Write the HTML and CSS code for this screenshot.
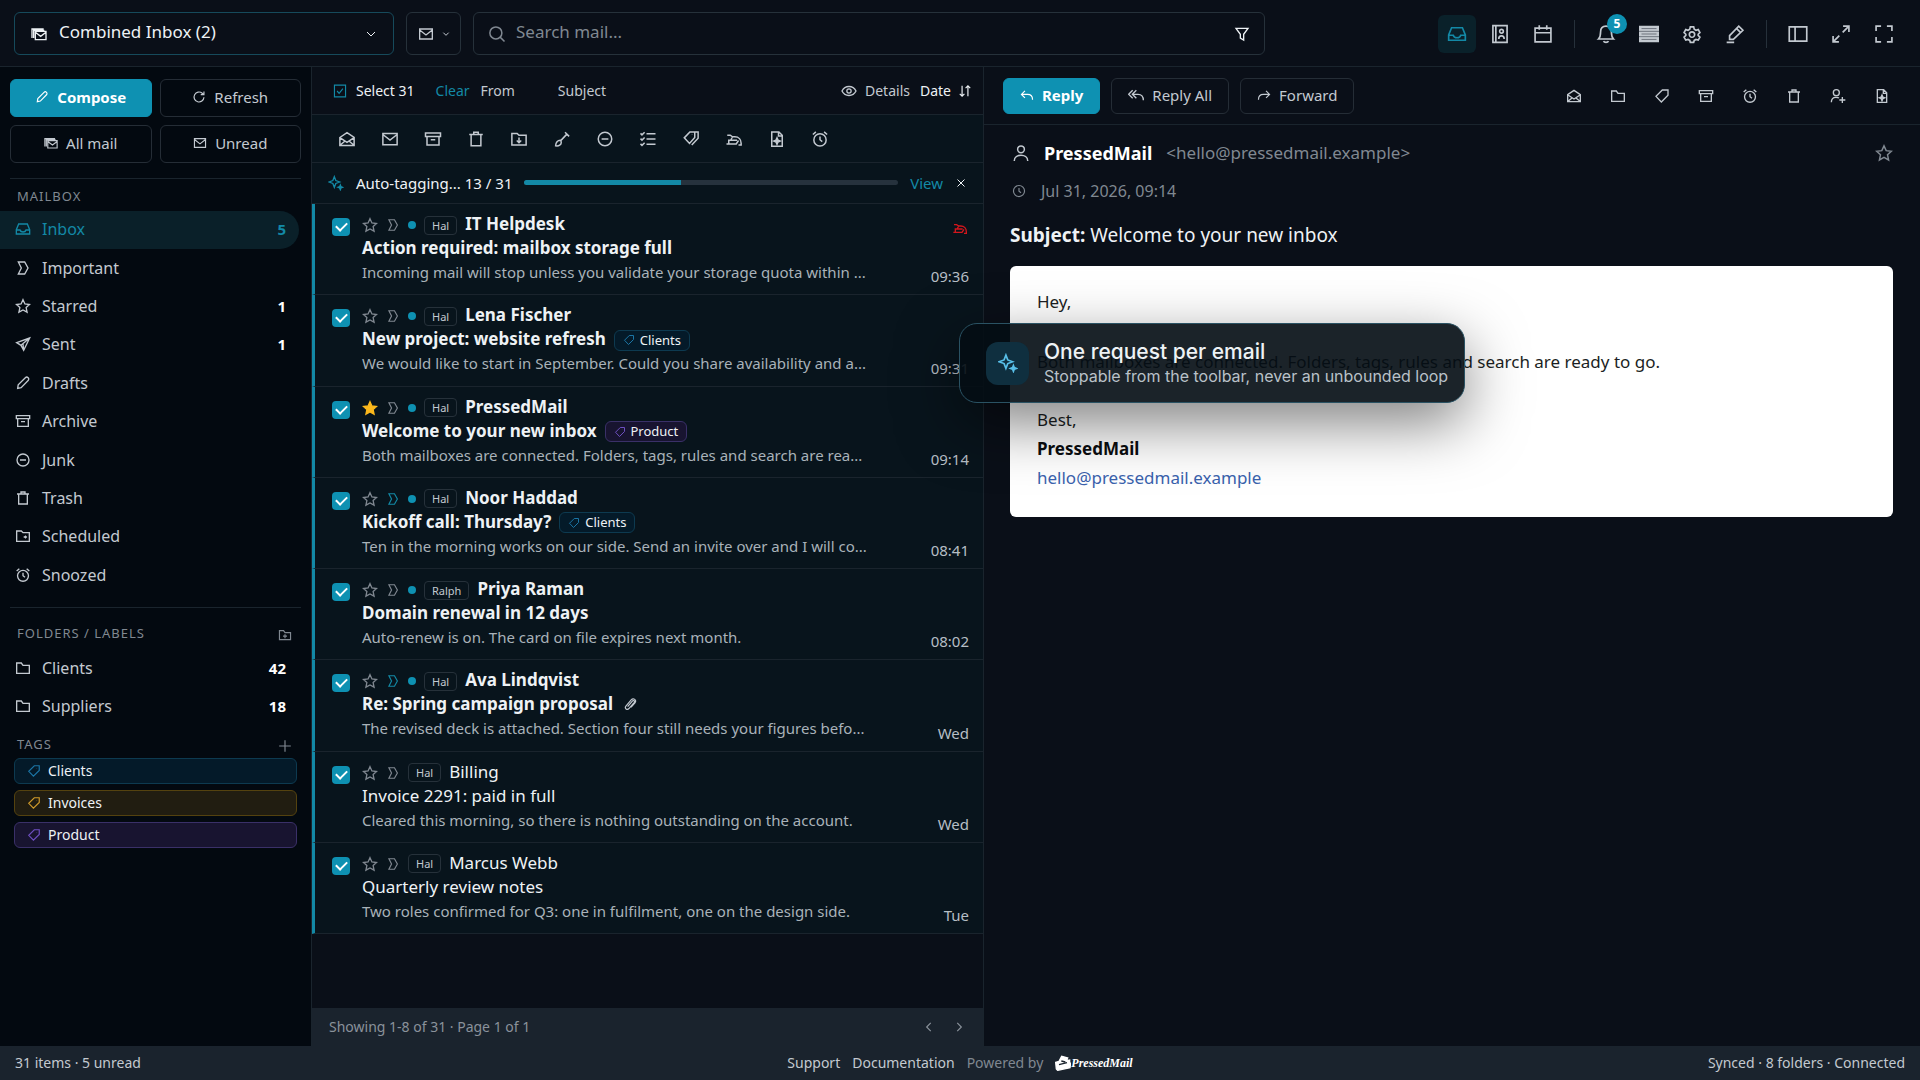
FILE: index.html
```html
<!DOCTYPE html>
<html lang="en">
<head>
<meta charset="utf-8">
<meta name="viewport" content="width=device-width, initial-scale=1">
<title>PressedMail</title>
<link rel="stylesheet" href="styles.css">
</head>
<body>
<svg class="sprite" aria-hidden="true">
  <symbol id="mail" viewBox="0 0 24 24"><path d="M2.5 4.5h19v15h-19zM2.5 6l9.500 7.500L21.500 6"/></symbol>
  <symbol id="mails" viewBox="0 0 24 24"><path d="M6.500 8h16v12.500h-16zM6.500 9.500l8 6 8-6M1.500 18V4.500H19M4 18V6.500h16"/></symbol>
  <symbol id="mail-open" viewBox="0 0 24 24"><path d="M2.500 10L12 3.500l9.500 6.500v10.500h-19zM3 10.500l9 6 9-6M3 20l6-5M21 20l-6-5"/></symbol>
  <symbol id="archive" viewBox="0 0 24 24"><path d="M2 4h20v4.500H2zM4 8.500V20h16V8.500M9 13h6"/></symbol>
  <symbol id="trash" viewBox="0 0 24 24"><path d="M3 6h18M9 6V3h6v3M5.500 6v15h13V6"/></symbol>
  <symbol id="folder" viewBox="0 0 24 24"><path d="M2.500 4.500h7L12 8h9.500v12h-19z"/></symbol>
  <symbol id="folder-plus" viewBox="0 0 24 24"><path d="M2.500 4.500h7L12 8h9.500v12h-19zM12 10.500v7M8.500 14h7"/></symbol>
  <symbol id="folder-move" viewBox="0 0 24 24"><path d="M2.500 4.500h7L12 7h9.500v13h-19zM12 10v7M9 14l3 3 3-3"/></symbol>
  <symbol id="folder-clock" viewBox="0 0 24 24"><path d="M2.500 4.500h7L12 7h9.500v13h-19zM13 13.500h4M15 11.500l2 2-2 2"/></symbol>
  <symbol id="sweep" viewBox="0 0 24 24"><path d="M16 3l5.500 5.500M18.500 5.500L10 14.500M9.500 13.500c-3 0-6 3-6 7.500 4.500.8 7.500-1.500 7.500-4.500 0-1.500-.500-2.500-1.500-3z"/></symbol>
  <symbol id="block" viewBox="0 0 24 24"><path d="M12 3a9 9 0 1 0 0 18 9 9 0 0 0 0-18zM7.500 12h9"/></symbol>
  <symbol id="checklist" viewBox="0 0 24 24"><path d="M10 5h12M10 12h12M10 19h12M2 4.500l2 2 3.500-3.500M2 11.500l2 2L7.500 10M2 18.500l2 2L7.500 17"/></symbol>
  <symbol id="tag" viewBox="0 0 24 24"><path d="M21 3h-8.500L3 12.500 11 21l10-10zM16.500 7.400v.2"/></symbol>
  <symbol id="tags" viewBox="0 0 24 24"><path d="M17 2.500h-6.500L3 10.500l7 7.500 7-8zM17 2.500h4.500V11L13 20M13.500 6v.2"/></symbol>
  <symbol id="phish" viewBox="0 0 24 24"><path d="M3 7h4l3 2h3c5.500 0 8.500 4 8.500 8.500V20H18M2 18.500h13l3-4.500M5 18.500v-5h7l4 0M10 9l-2 4"/></symbol>
  <symbol id="file-spark" viewBox="0 0 24 24"><path d="M5 2.500h9.500L19 7v14.500H5zM14 3v5h5"/><path class="solid" d="M12 10.500l1.300 3 3 1.300-3 1.300-1.300 3-1.300-3-3-1.300 3-1.300z"/></symbol>
  <symbol id="alarm" viewBox="0 0 24 24"><path d="M12 5a8.200 8.200 0 1 0 0 16.400A8.200 8.200 0 0 0 12 5zM12 8.500V13l3 2.500M2.500 6l4-3.500M21.500 6l-4-3.500"/></symbol>
  <symbol id="important" viewBox="0 0 24 24"><path d="M5 3h9.500l5 9-5 9H5l4.500-9z"/></symbol>
  <symbol id="star" viewBox="0 0 24 24"><path d="M12 2.500l2.900 6.400 6.900.8-5.100 4.700 1.400 6.900L12 17.900l-6.100 3.400 1.400-6.900L2.200 9.700l6.900-.8z"/></symbol>
  <symbol id="send" viewBox="0 0 24 24"><path d="M22 3L2.500 10l6.500 4 4 7.500zM22 3L9 14M13 21.500L12 12"/></symbol>
  <symbol id="pencil" viewBox="0 0 24 24"><path d="M4 20l.8-5.200L15.500 4c1.200-1.200 3-1.200 4.200 0s1.200 3 0 4.200L9.200 19z"/></symbol>
  <symbol id="inbox" viewBox="0 0 24 24"><path d="M5.500 4.500h13L22 13v6.500H2V13zM2 13.500h5.500c.5 2 2 3 4.500 3s4-1 4.500-3H22"/></symbol>
  <symbol id="contacts" viewBox="0 0 24 24"><path d="M3.500 2h17v20h-17zM7 2v20M10.500 18c0-5 6.500-5 6.500 0M13.800 6.500a2.200 2.200 0 1 0 0 4.400 2.200 2.200 0 0 0 0-4.400z"/></symbol>
  <symbol id="calendar" viewBox="0 0 24 24"><path d="M2.500 5h19v16.500h-19zM2.500 10.500h19M7.500 1.500V7M16.500 1.500V7"/></symbol>
  <symbol id="bell" viewBox="0 0 24 24"><path d="M3 18h18c-2-2-2.500-4-2.500-8.500C18.500 5 16 2.500 12 2.500S5.500 5 5.500 9.500C5.500 14 5 16 3 18zM9 20.500c1 2 5 2 6 0"/></symbol>
  <symbol id="rows" viewBox="0 0 24 24"><path class="solid" d="M1 3h22v5H1zM1 9.500h22v5H1zM1 16h22v5H1z"/><path class="slit" d="M3 5.500h18M3 12h18M3 18.500h18M0 8.800h24M0 15.200h24"/></symbol>
  <symbol id="gear" viewBox="0 0 24 24"><path d="M10 3.500h4l.7 2.800 2 1.200 2.800-.8 2 3.600-2.100 2v1.400l2.100 2-2 3.600-2.800-.8-2 1.200-.7 2.300h-4l-.7-2.300-2-1.200-2.800.8-2-3.600 2.100-2v-1.400l-2.100-2 2-3.600 2.800.8 2-1.200zM12 9.500a3.200 3.200 0 1 0 0 6.400 3.200 3.200 0 0 0 0-6.400z"/></symbol>
  <symbol id="marker" viewBox="0 0 24 24"><path d="M5.500 18.500V14L16.500 2.500l5 5L10 18.500zM14 5.500l4.500 4.500M2 22h9"/></symbol>
  <symbol id="layout" viewBox="0 0 24 24"><path d="M1.500 3.500h21v17h-21zM8.500 3.500v17"/></symbol>
  <symbol id="expand" viewBox="0 0 24 24"><path d="M14.500 2.500h7v7M21.500 2.500L14 10M9.500 21.500h-7v-7M2.500 21.500L10 14"/></symbol>
  <symbol id="full" viewBox="0 0 24 24"><path d="M2.500 8.500v-6h6M15.500 2.500h6v6M21.500 15.500v6h-6M8.500 21.500h-6v-6"/></symbol>
  <symbol id="eye" viewBox="0 0 24 24"><path d="M1.500 12C6 3 18 3 22.500 12 18 21 6 21 1.500 12zM12 8.800a3.200 3.200 0 1 0 0 6.400 3.200 3.200 0 0 0 0-6.400z"/></symbol>
  <symbol id="sort" viewBox="0 0 24 24"><path d="M7 3v18M3 17l4 4 4-4M17 21V3M13 7l4-4 4 4"/></symbol>
  <symbol id="spark" viewBox="0 0 24 24"><path d="M9.500 2.500l2.200 5.800 5.800 2.200-5.800 2.200-2.200 5.800-2.200-5.800-5.800-2.200 5.800-2.200z"/><path class="solid" d="M18.500 15l1 2.500 2.500 1-2.500 1-1 2.500-1-2.500-2.500-1 2.500-1z"/></symbol>
  <symbol id="close" viewBox="0 0 24 24"><path d="M5 5l14 14M19 5L5 19"/></symbol>
  <symbol id="down" viewBox="0 0 24 24"><path d="M4 8l8 8 8-8"/></symbol>
  <symbol id="left" viewBox="0 0 24 24"><path d="M15 5l-7 7 7 7"/></symbol>
  <symbol id="right" viewBox="0 0 24 24"><path d="M9 5l7 7-7 7"/></symbol>
  <symbol id="search" viewBox="0 0 24 24"><path d="M10.500 2.500a8 8 0 1 0 0 16 8 8 0 0 0 0-16zM16.500 16.500l5.500 5.500"/></symbol>
  <symbol id="filter" viewBox="0 0 24 24"><path d="M3 3.500h18l-6.500 9V21l-5-3v-5.500z"/></symbol>
  <symbol id="refresh" viewBox="0 0 24 24"><path d="M20.500 12.500a8.500 8.500 0 1 1-3-7L20 8M20.500 2.500V8H15"/></symbol>
  <symbol id="reply" viewBox="0 0 24 24"><path d="M8.500 5L2.500 11l6 6M3 11h10c5 0 8.500 3 8.500 9"/></symbol>
  <symbol id="reply-all" viewBox="0 0 24 24"><path d="M12.500 5l-6 6 6 6M7 5l-6 6 6 6M7 11h8c5 0 8 3 8 9"/></symbol>
  <symbol id="forward" viewBox="0 0 24 24"><path d="M15.500 5l6 6-6 6M21 11H11c-5 0-8.500 3-8.500 9"/></symbol>
  <symbol id="user" viewBox="0 0 24 24"><path d="M12 2.500a4.500 4.500 0 1 0 0 9 4.500 4.500 0 0 0 0-9zM3 22.500c0-10 18-10 18 0"/></symbol>
  <symbol id="user-plus" viewBox="0 0 24 24"><path d="M9.500 2.500a4.500 4.500 0 1 0 0 9 4.500 4.500 0 0 0 0-9zM2 21.500c0-6 3-7.500 7-7.500 2 0 3.500.3 4.500 1M18.500 13.500v9M14 18h9"/></symbol>
  <symbol id="clock" viewBox="0 0 24 24"><path d="M12 2.500a9.500 9.500 0 1 0 0 19 9.500 9.500 0 0 0 0-19zM12 7v5.500l3.500 2.500"/></symbol>
  <symbol id="clip" viewBox="0 0 24 24"><path d="M8 16.500l8-9.500c2-2.500 5 0 3 2.500l-8.500 10c-3.500 4-8.500 0-5.500-4l9-10.500c4-4.500 10 .5 6.500 5l-6.500 7.500"/></symbol>
  <symbol id="plus" viewBox="0 0 24 24"><path d="M12 2v20M2 12h20"/></symbol>
  <symbol id="check-square" viewBox="0 0 24 24"><path d="M2.500 2h19v20h-19zM7 12l3.500 4L17 8"/></symbol>
  <symbol id="press" viewBox="0 0 24 24"><path class="solid" d="M1 11l5-1.500L10 2l9 2.500-2 4 5-1v4l1.500 1-1 6.500L4 23l-2-2z"/><path class="notch" d="M9.500 9l6 1.500M6 14.500l12-3"/></symbol>
</svg>

<div class="app">
  <header class="topbar">
    <label class="field account">
      <svg class="icon i16"><use href="#mails"/></svg>
      <select aria-label="Mailbox"><option>Combined Inbox (2)</option></select>
      <svg class="icon i12"><use href="#down"/></svg>
    </label>
    <button class="field scope" aria-label="Search scope"><svg class="icon i16"><use href="#mail"/></svg><svg class="icon i8"><use href="#down"/></svg></button>
    <label class="field search">
      <svg class="icon i18 muted"><use href="#search"/></svg>
      <input type="text" aria-label="Search mail" placeholder="Search mail...">
      <svg class="icon i16"><use href="#filter"/></svg>
    </label>
    <nav class="apps" aria-label="Apps">
      <button class="tool active" aria-label="Mail"><svg class="icon i20"><use href="#inbox"/></svg></button>
      <button class="tool" aria-label="Contacts"><svg class="icon i20"><use href="#contacts"/></svg></button>
      <button class="tool" aria-label="Calendar"><svg class="icon i20"><use href="#calendar"/></svg></button>
      <span class="rule"></span>
      <button class="tool" aria-label="Notifications"><svg class="icon i20"><use href="#bell"/></svg><span class="badge">5</span></button>
      <button class="tool" aria-label="Density"><svg class="icon i20"><use href="#rows"/></svg></button>
      <button class="tool" aria-label="Settings"><svg class="icon i20"><use href="#gear"/></svg></button>
      <button class="tool" aria-label="Theme"><svg class="icon i20"><use href="#marker"/></svg></button>
      <span class="rule"></span>
      <button class="tool" aria-label="Layout"><svg class="icon i20"><use href="#layout"/></svg></button>
      <button class="tool" aria-label="Expand"><svg class="icon i20"><use href="#expand"/></svg></button>
      <button class="tool" aria-label="Full screen"><svg class="icon i20"><use href="#full"/></svg></button>
    </nav>
  </header>

  <main class="panes">
    <aside class="sidebar">
      <div class="actions">
        <button class="btn primary"><svg class="icon i14"><use href="#pencil"/></svg>Compose</button>
        <button class="btn"><svg class="icon i14"><use href="#refresh"/></svg>Refresh</button>
        <button class="btn"><svg class="icon i14"><use href="#mails"/></svg>All mail</button>
        <button class="btn"><svg class="icon i14"><use href="#mail"/></svg>Unread</button>
      </div>
      <section class="group">
        <h2>Mailbox</h2>
        <ul class="boxes system">
          <li><a class="current" href="#"><svg class="icon i16"><use href="#inbox"/></svg>Inbox<b>5</b></a></li>
          <li><a href="#"><svg class="icon i16"><use href="#important"/></svg>Important</a></li>
          <li><a href="#"><svg class="icon i16"><use href="#star"/></svg>Starred<b>1</b></a></li>
          <li><a href="#"><svg class="icon i16"><use href="#send"/></svg>Sent<b>1</b></a></li>
          <li><a href="#"><svg class="icon i16"><use href="#pencil"/></svg>Drafts</a></li>
          <li><a href="#"><svg class="icon i16"><use href="#archive"/></svg>Archive</a></li>
          <li><a href="#"><svg class="icon i16"><use href="#block"/></svg>Junk</a></li>
          <li><a href="#"><svg class="icon i16"><use href="#trash"/></svg>Trash</a></li>
          <li><a href="#"><svg class="icon i16"><use href="#folder-clock"/></svg>Scheduled</a></li>
          <li><a href="#"><svg class="icon i16"><use href="#alarm"/></svg>Snoozed</a></li>
        </ul>
      </section>
      <section class="group labels">
        <div class="head"><h2>Folders / Labels</h2><button class="bare" aria-label="New folder"><svg class="icon i14"><use href="#folder-plus"/></svg></button></div>
        <ul class="boxes">
          <li><a href="#"><svg class="icon i16"><use href="#folder"/></svg>Clients<b>42</b></a></li>
          <li><a href="#"><svg class="icon i16"><use href="#folder"/></svg>Suppliers<b>18</b></a></li>
        </ul>
        <div class="head small"><h2>Tags</h2><button class="bare" aria-label="New tag"><svg class="icon i14"><use href="#plus"/></svg></button></div>
        <ul class="tags">
          <li><a class="tag blue" href="#"><svg class="icon i14"><use href="#tag"/></svg>Clients</a></li>
          <li><a class="tag gold" href="#"><svg class="icon i14"><use href="#tag"/></svg>Invoices</a></li>
          <li><a class="tag violet" href="#"><svg class="icon i14"><use href="#tag"/></svg>Product</a></li>
        </ul>
      </section>
    </aside>

    <section class="list">
      <div class="listhead">
        <button class="bare select"><svg class="icon i14 teal"><use href="#check-square"/></svg>Select 31</button>
        <button class="bare teal clear">Clear</button>
        <button class="bare from">From</button>
        <button class="bare">Subject</button>
        <button class="bare details"><svg class="icon i16"><use href="#eye"/></svg>Details</button>
        <button class="bare date">Date<svg class="icon i14"><use href="#sort"/></svg></button>
      </div>
      <div class="bulk">
        <button class="bare" aria-label="Mark read"><svg class="icon i18"><use href="#mail-open"/></svg></button>
        <button class="bare" aria-label="Mark unread"><svg class="icon i18"><use href="#mail"/></svg></button>
        <button class="bare" aria-label="Archive"><svg class="icon i18"><use href="#archive"/></svg></button>
        <button class="bare" aria-label="Delete"><svg class="icon i18"><use href="#trash"/></svg></button>
        <button class="bare" aria-label="Move"><svg class="icon i18"><use href="#folder-move"/></svg></button>
        <button class="bare" aria-label="Sweep"><svg class="icon i18"><use href="#sweep"/></svg></button>
        <button class="bare" aria-label="Junk"><svg class="icon i18"><use href="#block"/></svg></button>
        <button class="bare" aria-label="Tasks"><svg class="icon i18"><use href="#checklist"/></svg></button>
        <button class="bare" aria-label="Tags"><svg class="icon i18"><use href="#tags"/></svg></button>
        <button class="bare" aria-label="Phishing"><svg class="icon i18"><use href="#phish"/></svg></button>
        <button class="bare" aria-label="Summarize"><svg class="icon i18"><use href="#file-spark"/></svg></button>
        <button class="bare" aria-label="Snooze"><svg class="icon i18"><use href="#alarm"/></svg></button>
      </div>
      <div class="job">
        <svg class="icon i16 teal"><use href="#spark"/></svg>
        <label for="job">Auto-tagging... 13 / 31</label>
        <progress id="job" value="13" max="31"></progress>
        <a class="teal" href="#">View</a>
        <button class="bare" aria-label="Stop"><svg class="icon i12"><use href="#close"/></svg></button>
      </div>
      <ul class="mails">
        <li class="unread">
          <input type="checkbox" aria-label="IT Helpdesk" checked>
          <div class="body">
            <div class="from-line"><svg class="icon i16"><use href="#star"/></svg><svg class="icon i14"><use href="#important"/></svg><i class="dot"></i><span class="box">Hal</span><strong>IT Helpdesk</strong></div>
            <div class="subject">Action required: mailbox storage full</div>
            <p>Incoming mail will stop unless you validate your storage quota within ...</p>
          </div>
          <div class="side"><svg class="icon i16 red"><use href="#phish"/></svg><time>09:36</time></div>
        </li>
        <li class="unread">
          <input type="checkbox" aria-label="Lena Fischer" checked>
          <div class="body">
            <div class="from-line"><svg class="icon i16"><use href="#star"/></svg><svg class="icon i14"><use href="#important"/></svg><i class="dot"></i><span class="box">Hal</span><strong>Lena Fischer</strong></div>
            <div class="subject">New project: website refresh<span class="chip blue"><svg class="icon i12"><use href="#tag"/></svg>Clients</span></div>
            <p>We would like to start in September. Could you share availability and a...</p>
          </div>
          <div class="side"><time>09:31</time></div>
        </li>
        <li class="unread">
          <input type="checkbox" aria-label="PressedMail" checked>
          <div class="body">
            <div class="from-line"><svg class="icon i16 starred"><use href="#star"/></svg><svg class="icon i14"><use href="#important"/></svg><i class="dot"></i><span class="box">Hal</span><strong>PressedMail</strong></div>
            <div class="subject">Welcome to your new inbox<span class="chip violet"><svg class="icon i12"><use href="#tag"/></svg>Product</span></div>
            <p>Both mailboxes are connected. Folders, tags, rules and search are rea...</p>
          </div>
          <div class="side"><time>09:14</time></div>
        </li>
        <li class="unread">
          <input type="checkbox" aria-label="Noor Haddad" checked>
          <div class="body">
            <div class="from-line"><svg class="icon i16"><use href="#star"/></svg><svg class="icon i14 teal"><use href="#important"/></svg><i class="dot"></i><span class="box">Hal</span><strong>Noor Haddad</strong></div>
            <div class="subject">Kickoff call: Thursday?<span class="chip blue"><svg class="icon i12"><use href="#tag"/></svg>Clients</span></div>
            <p>Ten in the morning works on our side. Send an invite over and I will co...</p>
          </div>
          <div class="side"><time>08:41</time></div>
        </li>
        <li class="unread">
          <input type="checkbox" aria-label="Priya Raman" checked>
          <div class="body">
            <div class="from-line"><svg class="icon i16"><use href="#star"/></svg><svg class="icon i14"><use href="#important"/></svg><i class="dot"></i><span class="box">Ralph</span><strong>Priya Raman</strong></div>
            <div class="subject">Domain renewal in 12 days</div>
            <p>Auto-renew is on. The card on file expires next month.</p>
          </div>
          <div class="side"><time>08:02</time></div>
        </li>
        <li class="unread">
          <input type="checkbox" aria-label="Ava Lindqvist" checked>
          <div class="body">
            <div class="from-line"><svg class="icon i16"><use href="#star"/></svg><svg class="icon i14 teal"><use href="#important"/></svg><i class="dot"></i><span class="box">Hal</span><strong>Ava Lindqvist</strong></div>
            <div class="subject">Re: Spring campaign proposal<svg class="icon i14 clip"><use href="#clip"/></svg></div>
            <p>The revised deck is attached. Section four still needs your figures befo...</p>
          </div>
          <div class="side"><time>Wed</time></div>
        </li>
        <li>
          <input type="checkbox" aria-label="Billing" checked>
          <div class="body">
            <div class="from-line"><svg class="icon i16"><use href="#star"/></svg><svg class="icon i14"><use href="#important"/></svg><span class="box">Hal</span><strong>Billing</strong></div>
            <div class="subject">Invoice 2291: paid in full</div>
            <p>Cleared this morning, so there is nothing outstanding on the account.</p>
          </div>
          <div class="side"><time>Wed</time></div>
        </li>
        <li>
          <input type="checkbox" aria-label="Marcus Webb" checked>
          <div class="body">
            <div class="from-line"><svg class="icon i16"><use href="#star"/></svg><svg class="icon i14"><use href="#important"/></svg><span class="box">Hal</span><strong>Marcus Webb</strong></div>
            <div class="subject">Quarterly review notes</div>
            <p>Two roles confirmed for Q3: one in fulfilment, one on the design side.</p>
          </div>
          <div class="side"><time>Tue</time></div>
        </li>
      </ul>
      <div class="pager">
        <span>Showing 1-8 of 31 · Page 1 of 1</span>
        <button class="bare" aria-label="Previous page"><svg class="icon i14"><use href="#left"/></svg></button>
        <button class="bare" aria-label="Next page"><svg class="icon i14"><use href="#right"/></svg></button>
      </div>
    </section>

    <section class="reader">
      <div class="readbar">
        <button class="btn primary"><svg class="icon i14"><use href="#reply"/></svg>Reply</button>
        <button class="btn"><svg class="icon i16"><use href="#reply-all"/></svg>Reply All</button>
        <button class="btn"><svg class="icon i14"><use href="#forward"/></svg>Forward</button>
        <div class="quick">
          <button class="bare" aria-label="Mark read"><svg class="icon i16"><use href="#mail-open"/></svg></button>
          <button class="bare" aria-label="Move"><svg class="icon i16"><use href="#folder"/></svg></button>
          <button class="bare" aria-label="Tag"><svg class="icon i16"><use href="#tag"/></svg></button>
          <button class="bare" aria-label="Archive"><svg class="icon i16"><use href="#archive"/></svg></button>
          <button class="bare" aria-label="Snooze"><svg class="icon i16"><use href="#alarm"/></svg></button>
          <button class="bare" aria-label="Delete"><svg class="icon i16"><use href="#trash"/></svg></button>
          <button class="bare" aria-label="Add contact"><svg class="icon i16"><use href="#user-plus"/></svg></button>
          <button class="bare" aria-label="Summarize"><svg class="icon i16"><use href="#file-spark"/></svg></button>
        </div>
      </div>
      <article class="message">
        <div class="sender"><svg class="icon i18"><use href="#user"/></svg><strong>PressedMail</strong><span>&lt;hello@pressedmail.example&gt;</span><button class="bare" aria-label="Star"><svg class="icon i18"><use href="#star"/></svg></button></div>
        <div class="when"><svg class="icon i14"><use href="#clock"/></svg><time>Jul 31, 2026, 09:14</time></div>
        <h1><b>Subject:</b> Welcome to your new inbox</h1>
        <div class="paper">
          <p>Hey,</p>
          <p>Both mailboxes are connected. Folders, tags, rules and search are ready to go.</p>
          <p>Best,<br><b>PressedMail</b><br><a href="#">hello@pressedmail.example</a></p>
        </div>
      </article>
      <aside class="toast">
        <span class="glyph"><svg class="icon i20"><use href="#spark"/></svg></span>
        <div><strong>One request per email</strong><p>Stoppable from the toolbar, never an unbounded loop</p></div>
      </aside>
    </section>
  </main>

  <footer class="status">
    <span>31 items · 5 unread</span>
    <div class="links">
      <a href="#">Support</a>
      <a href="#">Documentation</a>
      <span class="powered">Powered by</span>
      <span class="brand"><svg class="icon i16"><use href="#press"/></svg>PressedMail</span>
    </div>
    <span class="sync">Synced · 8 folders · Connected</span>
  </footer>
</div>
</body>
</html>
```
FILE: styles.css
```css
:root {
  --teal: #1389a6;
  --accent: #0e91b2;
  --line: #1a242d;
  --text: #eef2f5;
  --soft: #c3c9d0;
  --muted: #808891;
  --panel: #0a0f18;
}

* { box-sizing: border-box; }

body {
  margin: 0;
  background: var(--panel);
  color: var(--text);
  font: 15px/24px "Noto Sans", sans-serif;
}

ul, p, h1, h2 { margin: 0; padding: 0; list-style: none; font-weight: 400; }
a { color: inherit; text-decoration: none; }
button, input, select { font: inherit; color: inherit; margin: 0; }

.sprite { display: none; }
.icon { flex: none; fill: none; stroke: currentColor; stroke-width: 2; }
.solid { fill: currentColor; }
.slit { stroke: #5d636d; stroke-width: 1; }
.notch { stroke: #1a232d; }
.i8 { width: 8px; height: 8px; stroke-width: 3; }
.i12 { width: 12px; height: 12px; }
.i14 { width: 14px; height: 14px; }
.i16 { width: 16px; height: 16px; }
.i18 { width: 18px; height: 18px; }
.i20 { width: 20px; height: 20px; }
.teal { color: var(--teal); }
.red { color: #d3161c; }
.muted { color: var(--muted); }

.app { display: flex; flex-direction: column; min-height: 100vh; }

.bare {
  display: flex;
  align-items: center;
  justify-content: center;
  padding: 0;
  border: 0;
  background: none;
}

/* Top bar */
.topbar {
  display: flex;
  align-items: center;
  gap: 12px;
  padding: 12px 17px 11px 14px;
  border-bottom: 1px solid var(--line);
}
.field {
  display: flex;
  align-items: center;
  height: 43px;
  border: 1px solid #26313a;
  border-radius: 6px;
  background: transparent;
}
.account { flex: 0 1 380px; gap: 12px; padding: 0 16px; border-color: #164a5b; }
.account select {
  flex: 1;
  min-width: 0;
  padding: 0 0 3px;
  border: 0;
  background: none;
  appearance: none;
  font-size: 17px;
}
.scope { gap: 8px; padding: 0 10px; justify-content: center; width: 55px; color: var(--soft); }
.search { flex: 0 1 792px; gap: 10px; padding: 0 14px; }
.search input { flex: 1; min-width: 0; padding: 0 0 3px; border: 0; outline: 0; background: none; font-size: 17px; }
.search input::placeholder { color: var(--muted); opacity: 1; }
.apps { display: flex; align-items: center; gap: 5px; margin-left: auto; }
.tool {
  position: relative;
  display: grid;
  place-items: center;
  width: 38px;
  height: 38px;
  padding: 0;
  border: 0;
  border-radius: 6px;
  background: none;
  color: var(--soft);
}
.tool.active { background: #0a212a; color: var(--teal); }
.rule { width: 1px; height: 28px; margin: 0 7px; background: #26303a; }
.badge {
  position: absolute;
  top: -1px;
  right: -2px;
  width: 20px;
  border-radius: 10px;
  background: var(--accent);
  color: #fff;
  font-size: 12px;
  font-weight: 700;
  line-height: 20px;
}

/* Panes */
.panes { flex: 1; display: grid; grid-template-columns: 312px minmax(0, 35%) minmax(0, 1fr); }

.btn {
  display: flex;
  align-items: center;
  justify-content: center;
  gap: 8px;
  height: 38px;
  padding: 0 16px 2px;
  border: 1px solid #252d36;
  border-radius: 6px;
  background: transparent;
  color: var(--soft);
}
.btn.primary { border-color: var(--accent); background: var(--accent); color: #fff; font-weight: 700; }

/* Sidebar */
.sidebar { border-right: 1px solid var(--line); background: #030910; color: var(--soft); }
.actions {
  display: grid;
  grid-template-columns: 1fr 1fr;
  gap: 8px;
  margin: 0 10px;
  padding: 12px 0 15px;
  border-bottom: 1px solid var(--line);
}
.group h2 {
  padding: 7px 17px 5px;
  color: var(--muted);
  font-size: 13px;
  line-height: 20px;
  letter-spacing: 1px;
  text-transform: uppercase;
}
.boxes { display: grid; grid-auto-rows: 38px; font-size: 16px; }
.boxes.system { height: 384px; grid-auto-rows: 1fr; margin-bottom: 12px; }
.boxes a {
  display: flex;
  align-items: center;
  gap: 11px;
  height: 100%;
  margin-right: 12px;
  padding: 0 13px 2px 15px;
  border-radius: 0 20px 20px 0;
}
.boxes b { margin-left: auto; color: #fff; font-size: 15px; }
.boxes .current { background: #0a2029; color: var(--teal); }
.boxes .current b { color: var(--teal); }
.labels::before { content: ""; display: block; height: 1px; margin: 0 10px; background: var(--line); }
.head { display: flex; align-items: center; justify-content: space-between; padding: 8px 19px 2px 0; color: var(--muted); }
.head .bare { padding-top: 6px; }
.head.small { height: 32px; padding: 2px 19px 0 0; }

.tags { display: grid; gap: 6px; padding: 0 14px; }
.tag {
  display: flex;
  align-items: center;
  gap: 7px;
  height: 26px;
  padding: 0 12px 1px;
  border: 1px solid;
  border-radius: 6px;
  color: var(--text);
  font-size: 14px;
}
.tag.blue, .chip.blue { border-color: #0d3a50; background: #041a29; }
.blue .icon { color: #1b75a5; }
.tag.gold { border-color: #54420f; background: #211d11; }
.gold .icon { color: #cf9a2a; }
.tag.violet, .chip.violet { border-color: #3a3068; background: #181430; }
.violet .icon { color: #6d4fc0; }

/* Message list */
.list { display: flex; flex-direction: column; border-right: 1px solid var(--line); }
.listhead {
  display: flex;
  align-items: center;
  height: 48px;
  padding: 0 11px 0 21px;
  border-bottom: 1px solid var(--line);
  color: var(--soft);
  font-size: 14px;
}
.select { gap: 9px; color: var(--text); }
.clear { margin-left: 21px; }
.from { margin: 0 43px 0 11px; }
.details { gap: 8px; margin-left: auto; }
.date { gap: 7px; margin-left: 10px; color: var(--text); }
.bulk, .job { border-bottom: 1px solid var(--line); background: #08141c; }
.bulk { display: flex; height: 48px; padding-left: 13px; color: var(--soft); }
.bulk .bare { width: 43px; }
.job { display: flex; align-items: center; gap: 12px; height: 41px; padding: 0 16px 1px; }
.job progress { flex: 1; height: 5px; border: 0; border-radius: 3px; overflow: hidden; appearance: none; }
.job progress::-webkit-progress-bar { background: #26323d; }
.job progress::-webkit-progress-value { background: var(--teal); }

.mails { display: grid; grid-template-rows: repeat(8, 1fr); height: 730px; }
.mails li {
  display: flex;
  padding: 0 14px 0 17px;
  border-bottom: 1px solid var(--line);
  border-left: 3px solid var(--teal);
  background: #08141c;
}
.mails input {
  display: grid;
  place-items: center;
  width: 18px;
  height: 18px;
  margin: 14px 12px 0 0;
  border-radius: 4px;
  background: var(--accent);
  appearance: none;
}
.mails input::after {
  content: "";
  width: 5px;
  height: 9px;
  margin-bottom: 3px;
  border: solid #fff;
  border-width: 0 2px 2px 0;
  transform: rotate(45deg);
}
.body { flex: 1; min-width: 0; padding-top: 8px; }
.from-line { display: flex; align-items: center; gap: 8px; height: 24px; color: var(--muted); }
.from-line .icon { margin-top: 2px; }
.from-line strong { color: var(--text); font-size: 17px; font-weight: 400; }
.from-line .teal { color: var(--teal); }
.from-line .starred { color: #fbb81c; fill: currentColor; }
.dot { width: 8px; height: 8px; margin-top: 2px; border-radius: 4px; background: var(--accent); }
.box { margin-top: 2px; padding: 0 7px; border: 1px solid #26313a; border-radius: 4px; color: var(--soft); font-size: 11px; line-height: 17px; }
.subject { display: flex; align-items: center; height: 24px; font-size: 17px; }
.unread strong, .unread .subject { font-weight: 700; }
.chip {
  display: flex;
  align-items: center;
  gap: 5px;
  margin: 2px 0 0 8px;
  padding: 0 8px;
  border: 1px solid;
  border-radius: 6px;
  font-size: 13px;
  font-weight: 400;
  line-height: 19px;
}
.clip { margin-left: 10px; color: var(--soft); }
.mails p { color: #a9b2b9; white-space: nowrap; }
.side { display: flex; flex-direction: column; align-items: flex-end; padding: 16px 0 6px; color: #b6bec5; }
.side .icon { margin-right: 1px; }
.side time { margin-top: auto; }
.pager {
  display: flex;
  align-items: center;
  gap: 16px;
  height: 38px;
  margin-top: auto;
  padding: 0 17px;
  background: #1a232d;
  color: #8a929b;
  font-size: 14px;
}
.pager span { margin-right: auto; }

/* Reader */
.reader { position: relative; }
.readbar {
  display: flex;
  align-items: center;
  gap: 11px;
  height: 58px;
  padding: 0 16px 0 19px;
  border-bottom: 1px solid var(--line);
}
.readbar .btn { height: 36px; }
.quick { display: flex; margin-left: auto; color: var(--soft); }
.quick .bare { width: 44px; height: 36px; }
.message { padding: 13px 27px 0 26px; }
.sender { display: flex; align-items: center; gap: 14px; height: 30px; padding-left: 2px; font-size: 18px; color: var(--soft); }
.sender strong { color: #fff; }
.sender span { color: var(--muted); font-size: 17px; }
.sender .bare { margin-left: auto; color: var(--muted); }
.when { display: flex; align-items: center; gap: 15px; height: 45px; padding-left: 2px; color: var(--muted); font-size: 16px; }
h1 { margin: 7px 0 16px; font-size: 19px; line-height: 30px; }
.paper { padding: 21px 27px 25px; border-radius: 6px; background: #fff; color: #1c1f24; font-size: 17px; line-height: 29px; }
.paper p + p { margin-top: 31px; }
.paper b { color: #0b0d10; }
.paper a { color: #3a62ad; }
.paper p:last-child { margin-top: 29px; }

.toast {
  position: absolute;
  top: 256px;
  left: -25px;
  display: flex;
  align-items: center;
  gap: 15px;
  height: 80px;
  padding: 0 16px 0 26px;
  border: 1px solid #2a5263;
  border-radius: 18px;
  background: rgba(4, 13, 20, .91);
  box-shadow: 0 20px 60px rgba(0, 0, 0, .5);
  font: 16px/22px Inter, sans-serif;
}
.glyph { display: grid; place-items: center; width: 43px; height: 43px; border-radius: 12px; background: #0f2f3f; color: #58bfe8; }
.toast strong { font-size: 21px; font-weight: 500; line-height: 26px; }
.toast p { color: #b9c1c8; }

/* Status bar */
.status {
  display: grid;
  grid-template-columns: 1fr auto 1fr;
  align-items: center;
  height: 34px;
  padding: 0 15px;
  background: #1a232d;
  color: var(--soft);
  font-size: 14px;
}
.links { display: flex; gap: 12px; }
.powered { color: var(--muted); }
.brand { display: flex; align-items: center; font: italic 700 12px/24px "Liberation Serif", serif; color: #fff; }
.sync { text-align: right; }
```
